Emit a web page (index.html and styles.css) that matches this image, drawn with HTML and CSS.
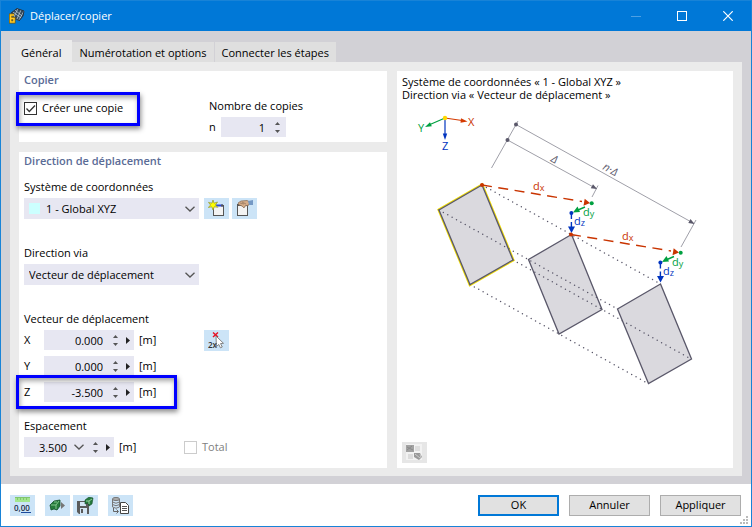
FILE: index.html
```html
<!DOCTYPE html>
<html lang="fr">
<head>
    <meta charset="utf-8">
    <title>Déplacer/copier</title>
    <link rel="stylesheet" href="styles.css">
</head>
<body>
    <!-- shared glyphs -->
    <svg class="defs" width="0" height="0" aria-hidden="true">
        <symbol id="chevron" viewBox="0 0 10 6"><path d="M0.5 0.7 L5 5 L9.5 0.7" fill="none" stroke="#555" stroke-width="1.3"/></symbol>
        <symbol id="up" viewBox="0 0 5 3"><path d="M0 3 L2.5 0 L5 3z" fill="#555"/></symbol>
        <symbol id="down" viewBox="0 0 5 3"><path d="M0 0 L2.5 3 L5 0z" fill="#555"/></symbol>
        <symbol id="play" viewBox="0 0 4 7"><path d="M0 0 L4 3.5 L0 7z" fill="#222"/></symbol>
    </svg>

    <header class="titlebar">
        <svg class="app-icon" width="16" height="16" viewBox="0 0 16 16">
            <path d="M2 5 L8 0.5 L15 3 L14 8 L10 13 L5 11z" fill="#34495c"/>
            <path d="M4 4 L12 10 M6 2 L13 8 M9 0.5 L5 9 M12 2 L8 11 M15 3 L10 12" stroke="#b9cbd9" stroke-width="0.8"/>
            <path d="M2 5 L8 0.5 L15 3 L14 8 L10 13" fill="none" stroke="#263442"/>
            <path d="M5 7 H1.5 V14 H5 V10.5 H2" fill="none" stroke="#7a5a00" stroke-width="3"/>
            <path d="M5 7 H1.5 V14 H5 V10.5 H2" fill="none" stroke="#ffca28" stroke-width="1.6"/>
        </svg>
        <h1>Déplacer/copier</h1>
        <div class="win-buttons">
            <button type="button" aria-label="Réduire" disabled><svg width="10" height="10"><path d="M0 5.5 H10" stroke="#4da0e4"/></svg></button>
            <button type="button" aria-label="Agrandir"><svg width="10" height="10"><rect x="0.5" y="0.5" width="9" height="9" fill="none" stroke="#fff"/></svg></button>
            <button type="button" aria-label="Fermer"><svg width="10" height="10"><path d="M0.3 0.3 L9.7 9.7 M9.7 0.3 L0.3 9.7" stroke="#fff" stroke-width="1.2"/></svg></button>
        </div>
    </header>

    <main class="content">
        <nav class="tabs" role="tablist">
            <button type="button" class="tab active" role="tab" aria-selected="true">Général</button>
            <button type="button" class="tab" role="tab">Numérotation et options</button>
            <button type="button" class="tab" role="tab">Connecter les étapes</button>
        </nav>

        <div class="panel">
            <form class="left">
                <section class="card">
                    <h2>Copier</h2>
                    <div class="columns copy-row">
                        <label class="check marked"><input type="checkbox" checked> Créer une copie</label>
                        <div class="field">
                            <label for="copies">Nombre de copies</label>
                            <div class="row">
                                <span class="count-name">n</span>
                                <span class="spin spin-count">
                                    <input id="copies" type="text" value="1">
                                    <span class="arrows">
                                        <button type="button" aria-label="Plus"><svg><use href="#up"/></svg></button>
                                        <button type="button" aria-label="Moins"><svg><use href="#down"/></svg></button>
                                    </span>
                                </span>
                            </div>
                        </div>
                    </div>
                </section>

                <section class="card direction">
                    <h2>Direction de déplacement</h2>

                    <div class="field system">
                        <label for="system">Système de coordonnées</label>
                        <div class="columns">
                            <span class="select">
                                <span class="swatch"></span>
                                <select id="system"><option>1 - Global XYZ</option></select>
                                <svg class="chevron"><use href="#chevron"/></svg>
                            </span>
                            <div class="tools">
                                <button type="button" class="tool" aria-label="Nouveau système">
                                    <svg width="17" height="17" viewBox="0 0 17 17">
                                        <rect x="5.5" y="5.5" width="10" height="10" fill="#f3f3f3" stroke="#555"/>
                                        <path d="M6 5.5 H15" stroke="#2a49d8" stroke-width="2"/><path d="M13 5.5 H15" stroke="#555" stroke-width="2"/>
                                        <path d="M5 0 L6 3.2 L9.5 2 L7.5 5 L9.8 7.3 L6.3 6.8 L5 10 L3.8 6.8 L0.3 7.5 L2.6 5 L0.5 2.4 L4 3.2z" fill="#ffff00" stroke="#91952d" stroke-width="0.7"/>
                                    </svg>
                                </button>
                                <button type="button" class="tool" aria-label="Modifier le système">
                                    <svg width="17" height="17" viewBox="0 0 17 17">
                                        <rect x="1.5" y="5.5" width="10" height="10" fill="#f3f3f3" stroke="#555"/>
                                        <path d="M1 5 H12" stroke="#555" stroke-width="2"/>
                                        <path d="M2 3 L5 1 L11 0.5 L14 2 L13 5 L9 6 L8 8 L6 6 L3 5z" fill="#d5ac88" stroke="#826752" stroke-width="0.7"/>
                                        <path d="M4 3 L8 4 M6 2 L10 4" stroke="#826752" stroke-width="0.6"/>
                                        <path d="M12 1 L17 0 V5 L13 5z" fill="#7599c5"/>
                                    </svg>
                                </button>
                            </div>
                        </div>
                    </div>

                    <div class="field via">
                        <label for="via">Direction via</label>
                        <div class="columns">
                            <span class="select">
                                <select id="via"><option>Vecteur de déplacement</option></select>
                                <svg class="chevron"><use href="#chevron"/></svg>
                            </span>
                        </div>
                    </div>

                    <div class="field vector">
                        <span>Vecteur de déplacement</span>
                        <div class="columns">
                            <div class="rows">
                                <div class="row">
                                    <label class="axis-name" for="vx">X</label>
                                    <span class="spin">
                                        <input id="vx" type="text" value="0.000">
                                        <span class="arrows">
                                            <button type="button" aria-label="Plus"><svg><use href="#up"/></svg></button>
                                            <button type="button" aria-label="Moins"><svg><use href="#down"/></svg></button>
                                        </span>
                                        <button type="button" class="more" aria-label="Autres valeurs"><svg><use href="#play"/></svg></button>
                                    </span>
                                    <span class="unit">[m]</span>
                                </div>
                                <div class="row">
                                    <label class="axis-name" for="vy">Y</label>
                                    <span class="spin">
                                        <input id="vy" type="text" value="0.000">
                                        <span class="arrows">
                                            <button type="button" aria-label="Plus"><svg><use href="#up"/></svg></button>
                                            <button type="button" aria-label="Moins"><svg><use href="#down"/></svg></button>
                                        </span>
                                        <button type="button" class="more" aria-label="Autres valeurs"><svg><use href="#play"/></svg></button>
                                    </span>
                                    <span class="unit">[m]</span>
                                </div>
                                <div class="row marked">
                                    <label class="axis-name" for="vz">Z</label>
                                    <span class="spin">
                                        <input id="vz" type="text" value="-3.500">
                                        <span class="arrows">
                                            <button type="button" aria-label="Plus"><svg><use href="#up"/></svg></button>
                                            <button type="button" aria-label="Moins"><svg><use href="#down"/></svg></button>
                                        </span>
                                        <button type="button" class="more" aria-label="Autres valeurs"><svg><use href="#play"/></svg></button>
                                    </span>
                                    <span class="unit">[m]</span>
                                </div>
                            </div>
                            <div class="tools">
                                <button type="button" class="tool" aria-label="Choisir deux points">
                                    <svg width="17" height="17" viewBox="0 0 17 17">
                                        <path d="M5 0.5 L10 5 M10 0.5 L5 5" stroke="#e81123" stroke-width="1.4"/>
                                        <path d="M8 4 L15.5 11.3 L12.5 11.6 L14.3 15 L12.4 15.8 L10.8 12.5 L8.4 14.5z" fill="#fff" stroke="#777" stroke-width="0.9"/>
                                        <text class="two" x="0" y="16">2x</text>
                                    </svg>
                                </button>
                            </div>
                        </div>
                    </div>

                    <div class="field spacing">
                        <label for="spacing">Espacement</label>
                        <div class="columns">
                            <div class="row">
                                <span class="spin">
                                    <input id="spacing" type="text" value="3.500">
                                    <svg class="chevron"><use href="#chevron"/></svg>
                                    <span class="arrows">
                                        <button type="button" aria-label="Plus"><svg><use href="#up"/></svg></button>
                                        <button type="button" aria-label="Moins"><svg><use href="#down"/></svg></button>
                                    </span>
                                    <button type="button" class="more" aria-label="Autres valeurs"><svg><use href="#play"/></svg></button>
                                </span>
                                <span class="unit">[m]</span>
                            </div>
                            <label class="check off"><input type="checkbox" disabled> Total</label>
                        </div>
                    </div>
                </section>
            </form>

            <section class="card preview">
                <p>Système de coordonnées « 1 - Global XYZ »<br>Direction via « Vecteur de déplacement »</p>

                <svg class="diagram" viewBox="402 106 326 290">
                    <defs>
                        <g id="step">
                            <path class="dx" d="M482 185 L582 201.500" stroke-dasharray="10 6.500"/>
                            <path d="M590 203 L583.500 205.700 L584.700 198.800z" fill="#c93400"/>
                            <circle cx="591.700" cy="203.300" r="2" fill="#00a040"/>
                            <path d="M585 207 L578 210" stroke="#00a040" stroke-width="1.400"/>
                            <path d="M573 212.500 L577.500 206.500 L580 212z" fill="#00a040"/>
                            <circle cx="571.400" cy="213" r="2" fill="#0034c0"/>
                            <path d="M571.400 213 V219 M571.400 222 V228" stroke="#0034c0" stroke-width="1.400"/>
                            <path d="M568 226.500 H575 L571.500 233z" fill="#0034c0"/>
                            <text class="x" x="533" y="190">d<tspan class="sub" dy="1">x</tspan></text>
                            <text class="y" x="583" y="216">d<tspan class="sub" dy="1">y</tspan></text>
                            <text class="z" x="574" y="225">d<tspan class="sub" dy="1">z</tspan></text>
                            <circle cx="482" cy="185" r="2" fill="#c93400"/>
                        </g>
                    </defs>

                    <!-- global axes -->
                    <path d="M445 118 L462 120.500" stroke="#d43a00" stroke-width="1.200"/>
                    <path d="M467.500 121.500 L460.500 122.700 L461 118.300z" fill="#d43a00"/>
                    <path d="M445 118 L430 124.500" stroke="#00a040" stroke-width="1.200"/>
                    <path d="M425 127 L430 122.300 L431.800 126.300z" fill="#00a040"/>
                    <path d="M445 118 V134" stroke="#0034c0" stroke-width="1.200"/>
                    <path d="M445 140 L442.800 133.500 H447.200z" fill="#0034c0"/>
                    <circle cx="445" cy="118" r="2.200" fill="#ffd800"/>
                    <text class="x" x="468" y="126">X</text>
                    <text class="y" x="418" y="132">Y</text>
                    <text class="z" x="442" y="150">Z</text>

                    <!-- dimension lines -->
                    <g stroke="#94949e" stroke-width="0.900">
                        <path d="M491.500 168 L518 121 M507.500 140 L597 189 M516 124.500 L694 223.500"/>
                        <path d="M598 185.500 L592 197 M696 220 L681 247"/>
                    </g>
                    <g fill="#5a586a">
                        <circle cx="507.500" cy="140" r="2"/><circle cx="516" cy="124.500" r="2"/>
                        <path d="M597 189 L590.800 188.200 L593 184.200z M694.500 224 L688.300 223 L690.500 219z"/>
                    </g>
                    <text class="dim" transform="translate(550 161) rotate(29)">Δ</text>
                    <text class="dim" transform="translate(602 169) rotate(29)">n·Δ</text>

                    <!-- original and copies -->
                    <path class="outline" d="M482 185 L439 210 L470 284.500 L513 260z"/>
                    <path class="shape" d="M482 185 L439 210 L470 284.500 L513 260z"/>
                    <path class="shape" d="M571.500 234.500 L528.500 259.500 L559 334 L602 309.500z"/>
                    <path class="shape" d="M660.500 284 L617.500 309 L648.500 383.500 L691.500 359z"/>
                    <path class="dots" d="M482 185 L660.500 284 M439 210 L617.500 309 M513 260 L691 359 M470 284.500 L648 383.500"/>
                    <use href="#step"/>
                    <use href="#step" x="89" y="49.500"/>
                </svg>

                <button type="button" class="tool grey" aria-label="Changer d'image" disabled>
                    <svg width="17" height="17" viewBox="0 0 17 17">
                        <rect x="0" y="0" width="16" height="16" fill="#f2f2f2"/>
                        <rect x="0" y="1" width="8" height="7" fill="#a2a2a2"/>
                        <path d="M1 3 L7 6 M1 6 L6 2" stroke="#8a8a8a"/>
                        <rect x="9" y="2" width="5" height="5" fill="#dedede"/>
                        <rect x="2" y="10" width="5" height="5" fill="#dcdcdc"/>
                        <path d="M8 9 H14 L16 13 L13 16 L8 13z" fill="#999"/>
                        <path d="M9 10 L14 14 M14 10 L15 14" stroke="#ccc"/>
                    </svg>
                </button>
            </section>
        </div>
    </main>

    <footer class="footer">
        <div class="foot-tools">
            <button type="button" class="tool" aria-label="Unités et décimales">
                <svg width="17" height="17" viewBox="0 0 17 17">
                    <rect x="1" y="0" width="15" height="5" fill="#a2e68e"/>
                    <path d="M1 0.500 H16 M3.500 0 V3 M6.500 0 V3 M9.500 0 V3 M12.500 0 V3" stroke="#82c56e"/>
                    <text class="digits" x="0" y="14">0,00</text>
                    <path d="M7 15.500 H17" stroke="#1b4a9c"/>
                </svg>
            </button>
            <button type="button" class="tool" aria-label="Appliquer au modèle">
                <svg width="17" height="17" viewBox="0 0 17 17">
                    <path d="M1 8 L5 4 L11 3 L11 9 L8 13 L5 12 L2 13z" fill="#247a3c" stroke="#174f2c" stroke-width="0.800"/>
                    <path d="M2 8 L7 8 L10 4 M7 8 V12 M5 5 H8" fill="none" stroke="#83c48e"/>
                    <path d="M12 5 L16 8.500 L12 12z" fill="#777"/>
                </svg>
            </button>
            <button type="button" class="tool" aria-label="Enregistrer">
                <svg width="17" height="17" viewBox="0 0 17 17">
                    <path d="M0 4 H12 V17 H2 L0 15z" fill="#5b5b5b"/>
                    <rect x="3" y="5" width="6" height="4" fill="#d5e6f5"/>
                    <rect x="3" y="11" width="7" height="6" fill="#d5e6f5"/>
                    <rect x="4" y="12" width="2" height="4" fill="#5b5b5b"/>
                    <path d="M8 3 L12 0 L16 1 L15 7 L12 9 L11 6 L8 7z" fill="#247a3c" stroke="#174f2c" stroke-width="0.600"/>
                    <path d="M9 4 H12 L15 2 M12 4 V7" fill="none" stroke="#a5d9ac" stroke-width="0.900"/>
                </svg>
            </button>
            <button type="button" class="tool apart" aria-label="Copier les données">
                <svg width="17" height="17" viewBox="0 0 17 17">
                    <ellipse cx="4" cy="2" rx="3.500" ry="1.600" fill="#aaa" stroke="#777"/>
                    <path d="M0.500 2 V10 Q4 12.500 7.500 10 V2 M0.500 5 Q4 7.500 7.500 5 M0.500 7.500 Q4 10 7.500 7.500" fill="none" stroke="#777"/>
                    <path d="M1.500 11 V14.500 H6 M4.500 12.500 L6.500 14.500 L4.500 16.500" fill="none" stroke="#666"/>
                    <path d="M8.500 5.500 H13.500 L16.500 8.500 V16.500 H8.500z" fill="#fff" stroke="#444"/>
                    <path d="M10 9.500 H15 M10 11.500 H15 M10 13.500 H15" stroke="#555"/>
                </svg>
            </button>
        </div>
        <div class="actions">
            <button type="button" class="action primary">OK</button>
            <button type="button" class="action">Annuler</button>
            <button type="button" class="action">Appliquer</button>
        </div>
        <svg class="grip" width="8" height="8"><path d="M6 0h2v2h-2z M3 3h2v2h-2z M6 3h2v2h-2z M0 6h2v2h-2z M3 6h2v2h-2z M6 6h2v2h-2z" fill="#bbb"/></svg>
    </footer>
</body>
</html>
```
FILE: styles.css
```css
*, *::after { box-sizing: border-box; }
body { margin: 0; min-height: 100vh; display: flex; flex-direction: column; border: 1px solid #1883d7; background: #fff; color: #000; font: 11px/16px "Open Sans", "Segoe UI", sans-serif; }
h1, h2, p { margin: 0; font-size: 11px; font-weight: normal; }
button, input, select { font: inherit; color: inherit; margin: 0; padding: 0; border: 0; background: none; }
svg { display: block; }
.defs { position: absolute; }

/* title bar */
.titlebar { height: 30px; display: flex; align-items: center; padding-left: 8px; background: #0078d7; color: #fff; }
.titlebar h1 { margin-left: 5px; flex: 1; }
.win-buttons { display: flex; align-self: stretch; }
.win-buttons button { width: 46px; display: flex; align-items: center; justify-content: center; }

/* tabs */
.content { flex: 1; display: flex; flex-direction: column; padding: 9px 9px 8px; background: #d2d1d6; }
.tabs { display: flex; align-items: flex-end; height: 22px; }
.tab { height: 20px; padding: 2px 7px 0; margin-right: 1px; background: #dfdfdf; white-space: nowrap; }
.tab.active { height: 22px; padding: 4px 11px 0; margin-right: 0; background: #ebebeb; }

.panel { flex: 1; display: grid; grid-template-columns: minmax(0, 368fr) minmax(0, 336fr); gap: 10px; padding: 9px 9px 8px; background: #ebebeb; }
.left { display: flex; flex-direction: column; gap: 10px; }
.card { background: #fff; padding: 1px 5px 5px; }
.card h2 { color: #5a6b96; font-weight: 600; }
.direction { flex: 1; padding-bottom: 11px; }

/* form fields */
.field { display: flex; flex-direction: column; gap: 3px; }
.columns { display: grid; grid-template-columns: 175px 1fr; gap: 5px; align-items: start; }
.copy-row { margin-top: 10px; grid-template-columns: 180px 1fr; }
.system { margin-top: 10px; }
.via, .vector { margin-top: 26px; }
.spacing { margin-top: 16px; }
.spacing .columns { grid-template-columns: 155px 1fr; }
.rows { display: flex; flex-direction: column; gap: 6px; }
.row { display: flex; align-items: center; }
.count-name { width: 12px; }
.axis-name { width: 20px; }
.unit { margin-left: 5px; }

.spin { display: flex; align-items: center; width: 90px; height: 20px; background: #e7e7f2; }
.spin input { flex: 1; min-width: 0; height: 20px; text-align: right; outline: 0; }
.spin-count { width: 65px; }
.spin-count input { padding-right: 8px; }
.spin-count .arrows { margin-right: 4px; }
.vector .spin input { padding-right: 8px; }
.arrows { display: flex; flex-direction: column; gap: 1px; padding: 0 2px; }
.arrows button { display: flex; align-items: center; height: 7px; }
.arrows svg { width: 5px; height: 3px; }
.more { margin: 0 4px 0 6px; }
.more svg { width: 4px; height: 7px; }
.spacing .chevron { margin: 0 7px; }

.select { display: flex; align-items: center; width: 175px; height: 21px; padding: 0 4px 0 5px; background: #e7e7f2; }
.select select { flex: 1; min-width: 0; height: 21px; appearance: none; outline: 0; }
.chevron { width: 10px; height: 6px; pointer-events: none; }
.swatch { width: 11px; height: 11px; margin-right: 6px; background: #ccffff; }

.check { display: flex; align-items: center; gap: 5px; height: 20px; }
.check input { appearance: none; width: 13px; height: 13px; border: 1px solid #333; background: #fff; }
.check input:checked { background: url("data:image/svg+xml,%3Csvg xmlns='http://www.w3.org/2000/svg' viewBox='0 0 11 11'%3E%3Cpath d='M1.5 5.5 L4.3 8.5 L10 2.5' fill='none' stroke='%23333' stroke-width='1.3'/%3E%3C/svg%3E"); }
.check.off { color: #808080; }
.check.off input { border-color: #ccc; }

/* callout frames */
.marked { position: relative; }
.marked::after { content: ""; position: absolute; inset: -6px auto -8px -8px; width: 124px; border: 3px solid #0000ff; box-shadow: 1px 3px 5px rgba(0,0,0,0.45), inset 1px 3px 5px rgba(0,0,0,0.35); pointer-events: none; }
.row.marked::after { inset: -7px auto -7px -8px; width: 161px; }

/* icon buttons */
.tools { display: flex; gap: 3px; }
.tool { width: 25px; height: 21px; display: flex; align-items: center; justify-content: center; background: #cce4f7; }
.tool.grey { background: #e6e6e6; }
.two { font-size: 8px; font-weight: 600; fill: #333; }
.digits { font-size: 8px; font-weight: 600; fill: #1b2a44; }

/* preview */
.preview { display: flex; flex-direction: column; padding: 4px 5px 5px; }
.preview p { line-height: 13px; }
.diagram { width: 100%; margin: 5px 0 auto; font-size: 11px; }
.diagram .x { fill: #c93400; }
.diagram .y { fill: #00a040; }
.diagram .z { fill: #0034c0; }
.diagram .sub { font-size: 9px; }
.diagram .dim { fill: #5a586a; font-size: 11px; font-style: italic; }
.diagram .shape { fill: #dad9de; stroke: #5a586a; stroke-width: 1.3; }
.diagram .outline { fill: none; stroke: #f0dc00; stroke-width: 3; }
.diagram .dots { fill: none; stroke: #5a586a; stroke-width: 1.5; stroke-linecap: round; stroke-dasharray: 0 5; }
.diagram .dx { stroke: #c93400; stroke-width: 1.4; }

/* footer */
.footer { position: relative; display: flex; justify-content: space-between; align-items: center; height: 42px; padding: 0 10px 0 9px; }
.foot-tools { display: flex; gap: 3px; }
.foot-tools .tool:first-child { margin-right: 7px; }
.foot-tools .apart { margin-left: 7px; }
.actions { display: flex; gap: 10px; }
.action { width: 81px; height: 21px; border: 1px solid #adadad; background: #e1e1e1; }
.action.primary { border: 2px solid #0078d7; }
.grip { position: absolute; right: 3px; bottom: 2px; }
```
